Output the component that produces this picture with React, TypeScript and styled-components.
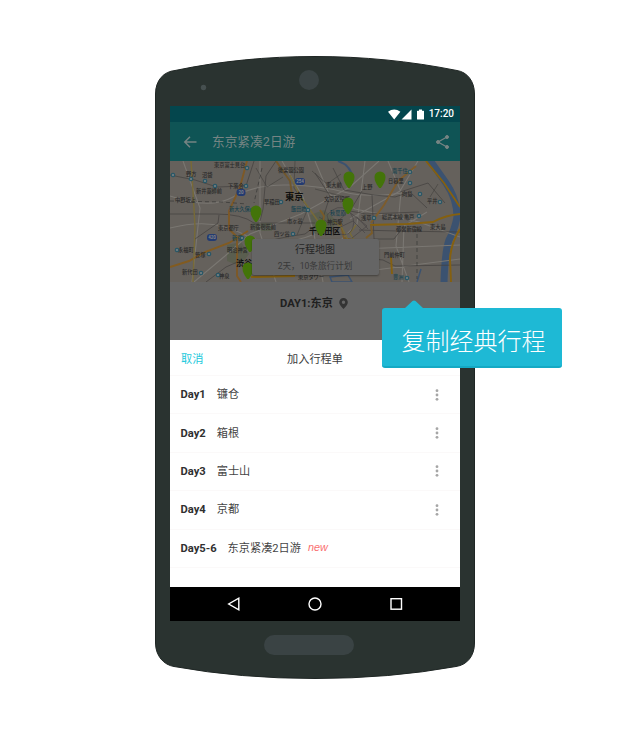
import React from "react";
import styled, { createGlobalStyle } from "styled-components";

const GlobalStyle = createGlobalStyle`
  * { box-sizing: border-box; }
  body { margin: 0; background: #fff; font-family: Roboto, "Noto Sans CJK SC", sans-serif; }
`;

const Stage = styled.main`
  position: relative;
  width: 636px;
  height: 743px;
  padding: 56px 0 0 155px;
  overflow: hidden;
  background: #fff;
`;

const Phone = styled.div`
  position: relative;
  display: flex;
  flex-direction: column;
  width: 320px;
  height: 623px;
  padding: 0 15px;
`;

const Shell = styled.svg`
  position: absolute;
  inset: 0;
  width: 320px;
  height: 623px;
`;

const TopBezel = styled.div`
  height: 50px;
  flex: none;
`;

const BottomBezel = styled.div`
  position: relative;
  display: flex;
  justify-content: center;
  padding: 14px 2px 0 0;
  margin-right: 10px;
`;

const HomeButton = styled.div`
  width: 90px;
  height: 20px;
  border-radius: 10px;
  background: #3a4344;
`;

const Screen = styled.div`
  position: relative;
  display: flex;
  flex-direction: column;
  width: 290px;
  height: 515px;
  flex: none;
  background: #fff;
`;

const StatusBar = styled.div`
  display: flex;
  align-items: center;
  justify-content: flex-end;
  height: 16px;
  padding-right: 6px;
  background: #04464d;
  color: #fff;
  font-size: 10px;
  font-weight: 500;
  line-height: 16px;
  svg { display: block; margin-right: 4px; }
`;

const AppBar = styled.header`
  display: flex;
  align-items: center;
  height: 39px;
  padding: 0 10px 0 13px;
  background: #0f5455;
  color: #768483;
`;

const AppTitle = styled.h1`
  flex: 1;
  margin: 0 0 0 15px;
  font-size: 12.7px;
  font-weight: 400;
  line-height: 18px;
`;

const MapArea = styled.section`
  position: relative;
  display: flex;
  align-items: flex-end;
  justify-content: center;
  height: 121px;
  padding: 0 0 7px 0;
  overflow: hidden;
`;

const MapDrawing = styled.svg`
  position: absolute;
  inset: 0;
`;

const MapCard = styled.div`
  position: relative;
  width: 127px;
  height: 36px;
  padding-top: 3px;
  border-radius: 2px;
  background: #656565;
  box-shadow: 0 1px 2px rgba(0, 0, 0, 0.35);
  text-align: center;
`;

const CardTitle = styled.div`
  color: #252525;
  font-size: 10px;
  line-height: 16px;
`;

const CardSub = styled.div`
  color: #393939;
  font-size: 8.6px;
  line-height: 16px;
  white-space: nowrap;
`;

const DayHeading = styled.div`
  display: flex;
  justify-content: center;
  height: 58px;
  padding: 13px 2px 0 0;
  background: #666;
  color: #202020;
  font-size: 11.2px;
  font-weight: 700;
  line-height: 17px;
  svg { display: block; margin: 3px 0 0 6px; }
`;

const Sheet = styled.section`
  height: 247px;
  background: #fff;
`;

const SheetHeader = styled.div`
  display: grid;
  grid-template-columns: 1fr auto 1fr;
  align-items: center;
  height: 36px;
  padding: 0 11px;
  border-bottom: 1px solid #fbf9f9;
  color: #3c3c3c;
  font-size: 11.2px;
`;

const Cancel = styled.span`
  color: #22c9dc;
`;

const Row = styled.div`
  display: flex;
  align-items: center;
  height: 38.4px;
  padding: 1px 21px 0 10.5px;
  border-bottom: 1px solid #fbf9f9;
  color: #444;
  font-size: 11.2px;
  line-height: 18px;
  svg { margin: -1px 0 0 auto; }
`;

const Day = styled.b`
  margin-right: 11px;
  color: #303030;
  font-size: 11.2px;
  font-weight: 700;
`;

const NewTag = styled.i`
  margin: -3px 0 0 7px;
  color: #fa6f70;
  font-family: "Liberation Sans", sans-serif;
  font-size: 10.8px;
`;

const NavBar = styled.nav`
  display: flex;
  align-items: center;
  justify-content: space-between;
  height: 34px;
  padding: 0 57px;
  background: #000;
`;

const Tooltip = styled.aside`
  position: absolute;
  left: 382px;
  top: 308px;
  display: flex;
  align-items: center;
  justify-content: center;
  width: 180px;
  height: 60px;
  padding-top: 5px;
  padding-left: 3px;
  border-radius: 3px;
  border-bottom: 2px solid #14a9c4;
  background: #1eb9d5;
  color: #fff;
  font-family: "Noto Sans CJK SC", sans-serif;
  font-size: 24px;
  font-weight: 300;
  line-height: 36px;
  white-space: nowrap;
`;

const TooltipArrow = styled.svg`
  position: absolute;
  left: 22px;
  top: -8px;
`;

const pins: [number, number][] = [
  [86, 50], [80, 80], [78, 107], [179, 16], [210, 16], [178, 42], [151, 64],
];

type Label = [number, number, string, string?];
const labels: Label[] = [
  [16, 15, "野方"], [32, 16, "沼袋"], [26, 32, "新井薬師前"], [58, 27, "下落合"],
  [44, 6, "東京富士見台"], [108, 11, "後楽園公園"], [5, 41, "中野坂上"], [59, 50, "新大久保", "#17424e"],
  [94, 43, "早稲田"], [121, 50, "飯田橋", "#17424e"], [48, 69, "東京都庁"], [80, 68, "新宿御苑前"],
  [62, 79, "新宿", "#17424e"], [117, 62, "市ヶ谷"], [104, 75, "四ツ谷"], [8, 91, "永福町"],
  [25, 96, "笹塚"], [57, 91, "明治神宮"], [12, 113, "新代田"], [49, 117, "神泉"],
  [156, 26, "東大前"], [192, 28, "上野"], [154, 40, "文京区役所"], [160, 54, "秋葉原", "#17424e"],
  [157, 63, "神田駅"], [191, 59, "浅草"], [222, 12, "南千住", "#17424e"], [218, 22, "日暮里"],
  [232, 35, "向島"], [257, 42, "平井"], [212, 58, "総武本線 亀戸"], [226, 70, "都営新宿線"],
  [260, 68, "東大島"], [214, 96, "門前仲町"], [223, 118, "豊洲", "#17424e"], [128, 118, "東京タワー"],
];

const stations: [number, number][] = [
  [3, 14], [21, 18], [35, 20], [45, 25], [77, 7], [76, 25], [82, 49], [72, 77],
  [7, 89], [39, 93], [31, 112], [48, 114], [138, 49], [123, 73], [111, 41],
  [204, 57], [240, 11], [240, 22], [250, 33], [270, 41], [249, 55], [237, 117],
];

const TokyoMap = () => (
  <MapDrawing width="290" height="121" viewBox="0 0 290 121">
    <rect width="290" height="121" fill="#65615c" />
    <g fill="#5a5e4f">
      <path d="M57 84l14-3 8 12-9 12-13-5zM140 54l14-5 12 10-4 12-17 2zM82 62h20v8H84z" />
    </g>
    <g fill="none" stroke="#3b5270">
      <path d="M259 -2L276 22Q287 38 287 56Q285 68 279 79Q275 90 274 121" strokeWidth="7" />
      <path d="M168 0Q181 4 183 18" strokeWidth="2" />
      <path d="M160 116l18-2 4 7h-20zM251 108l-4 13" strokeWidth="1.500" />
    </g>
    <g fill="none" stroke="#7a7772" strokeWidth="1.100">
      <path d="M0 35Q40 49 63 36T119 24 174 31 232 32M0 67Q43 56 73 73T145 73M24 121L55 95 80 73 131 53 180 26 209 0M13 0L30 47 22 121M90 0V72L106 121M112 0L133 36 144 73 153 121" />
      <path d="M145 0L159 33 185 48 249 61 290 76M155 95L187 63 195 0M218 0L231 31 226 85 239 121M190 88L290 84M190 111L290 98M248 0L230 30 180 58M257 51L234 65 232 121" />
    </g>
    <g fill="none" stroke="#423f3d" strokeWidth=".7">
      <path d="M0 53H46Q72 53 84 62H145M0 14L25 19 47 26 76 25 84 0M25 78L48 62 49 54M36 121L56 106 72 99M106 0L96 15 93 48 90 60" />
      <path d="M102 79L116 76 135 73 152 60 160 35 145 12M163 7L174 29 204 34 225 36 240 31 257 47M192 30L180 50 196 53 249 51M202 34L204 78H224L234 65M230 31L258 22 275 42M192 97L213 99 225 105 290 104M189 69L228 70 290 71" />
      <path d="M86 7L97 26 113 16M125 0L124 27 138 47 127 74M142 10L157 23 171 13M145 28L175 36 176 53 163 64 149 56M268 23L260 36" strokeWidth=".6" />
    </g>
    <g fill="none" stroke="#85600f" strokeWidth="1.900">
      <path d="M77 0L70 26 59 50V68L67 76V115L71 121" stroke="#7e5926" />
      <path d="M0 106L19 100 35 91 59 82 78 70" stroke="#825b20" />
      <path d="M106 0L115 13 120 20 123 40" stroke="#71572c" />
      <path d="M246 5L228 20 214 44 201 62" stroke="#7d5c2c" />
      <path d="M200 64L237 63 263 61Q276 54 290 53M221 96L222 113M256 0L274 22 290 46M290 68Q281 82 280 98L281 121M81 116L125 115" />
      <path d="M150 49L154 55 153 61M170 60L174 77 182 79M201 64L202 72 196 77" stroke="#795b29" />
    </g>
    <g fill="none" stroke="#776a37" strokeWidth="1.400">
      <path d="M21 0L23 30 25 66 23 121M163 60L172 67 178 79M186 64L180 72 184 79M120 14L130 35 148 60" />
    </g>
    <g fill="none" stroke="#4b4847" strokeWidth=".8">
      <path d="M157 54Q168 42 177 49T183 66 170 73 157 54M178 50L197 65 182 77M187 56L198 68M160 71L183 60 195 72" />
    </g>
    <g fill="none" stroke="#373635" strokeWidth=".7" strokeDasharray="4 3">
      <path d="M0 40L52 41 77 43M247 66V118M92 7L84 42" />
    </g>
    <g fontFamily="Noto Sans CJK JP" fontSize="5.200" fill="#292929">
      {labels.map(([x, y, text, fill]) => (
        <text key={text} x={x} y={y} fill={fill} fontWeight="500">{text}</text>
      ))}
    </g>
    <g fill="#69787c" stroke="#185367" strokeWidth="1">
      {stations.map(([x, y]) => (
        <rect key={`${x}-${y}`} x={x - 1.6} y={y - 1.6} width="3.200" height="3.200" rx=".8" />
      ))}
    </g>
    <g fill="#233b72">
      <rect x="66.500" y="28" width="9" height="7" rx="3" />
      <rect x="37" y="73" width="10" height="7" rx="3" />
      <rect x="125" y="17" width="10" height="7" rx="3" />
    </g>
    <g fontFamily="Roboto" fontSize="4.500" fontWeight="700" fill="#858585" textAnchor="middle">
      <text x="71" y="33.200">20</text>
      <text x="42" y="78.200">420</text>
      <text x="130" y="22.200">254</text>
    </g>
    <g fontFamily="Noto Sans CJK JP" fill="#111" fontWeight="700">
      <text x="115" y="38.500" fontSize="9.200">東京</text>
      <text x="139" y="73" fontSize="7.800">千代田区</text>
      <text x="66" y="105" fontSize="8">渋谷</text>
    </g>
    <g fill="#437409">
      {pins.map(([x, y]) => (
        <path key={`${x}-${y}`} transform={`translate(${x} ${y})`} d="M-5.500 0a5.500 5.500 0 0 1 11 0Q5.500 5 .8 11H-.8Q-5.500 5-5.500 0Z" />
      ))}
    </g>
  </MapDrawing>
);

const MoreDots = () => (
  <svg width="4" height="14" viewBox="0 0 4 14" fill="#a6a6a6">
    <circle cx="2" cy="2.700" r="1.400" />
    <circle cx="2" cy="7" r="1.400" />
    <circle cx="2" cy="11.300" r="1.400" />
  </svg>
);

const days = [
  { day: "Day1", place: "镰仓" },
  { day: "Day2", place: "箱根" },
  { day: "Day3", place: "富士山" },
  { day: "Day4", place: "京都" },
  { day: "Day5-6", place: "东京紧凑2日游", isNew: true },
];

export default function App() {
  return (
    <Stage>
      <GlobalStyle />
      <Phone>
        <Shell viewBox="0 0 320 623">
          <path d="M0.500 38C0.500 24 9 15.500 20 14.500C66 5 112 .5 160 .5S254 5 302 14.500C312 16 319.500 25 319.500 38V587C319.500 600 312 609 301 610.500Q235 622.500 160 622.500T19 610.500C9 609 .5 600 .5 587Z" fill="#2a3330" stroke="#1f2624" />
          <circle cx="154" cy="24" r="10" fill="#3a4344" />
          <circle cx="48.500" cy="31.500" r="2.700" fill="#465050" />
        </Shell>
        <TopBezel />
        <Screen>
          <StatusBar>
            <svg width="37" height="11" viewBox="0 0 37 11" fill="#fff">
              <path d="M0 2.700Q6.200-1.700 12.400 2.700L6.200 10.500ZM23.500 .5V10.500H13.500ZM29.500 1.700H31V.5H34V1.700H35.500Q36 1.700 36 2.200V10Q36 10.500 35.500 10.500H29.500Q29 10.500 29 10V2.200Q29 1.700 29.500 1.700Z" />
            </svg>
            17:20
          </StatusBar>
          <AppBar>
            <svg width="14" height="12" viewBox="0 0 14 12" fill="none" stroke="#768483" strokeWidth="1.500">
              <path d="M13.500 6H2M7 .8L1.800 6 7 11.200" />
            </svg>
            <AppTitle>东京紧凑2日游</AppTitle>
            <svg width="15" height="16" viewBox="0 0 15 16" fill="#768483" stroke="#768483">
              <path d="M12 3L3 8l9 5" fill="none" strokeWidth="1.300" />
              <circle cx="12" cy="3" r="1.500" />
              <circle cx="3" cy="8" r="1.500" />
              <circle cx="12" cy="13" r="1.500" />
            </svg>
          </AppBar>
          <MapArea>
            <TokyoMap />
            <MapCard>
              <CardTitle>行程地图</CardTitle>
              <CardSub>2天，10条旅行计划</CardSub>
            </MapCard>
          </MapArea>
          <DayHeading>
            DAY1:东京
            <svg width="9" height="11" viewBox="0 0 9 11">
              <path fillRule="evenodd" d="M4.500 0A4.300 4.300 0 0 1 8.800 4.300Q8.800 7 4.500 11Q.2 7 .2 4.300A4.300 4.300 0 0 1 4.500 0ZM4.500 2.600a1.700 1.700 0 1 0 0 3.400a1.700 1.700 0 1 0 0-3.400Z" fill="#343434" />
            </svg>
          </DayHeading>
          <Sheet>
            <SheetHeader>
              <Cancel>取消</Cancel>
              <span>加入行程单</span>
            </SheetHeader>
            {days.map(({ day, place, isNew }) => (
              <Row key={day}>
                <Day>{day}</Day>
                {place}
                {isNew ? <NewTag>new</NewTag> : <MoreDots />}
              </Row>
            ))}
          </Sheet>
          <NavBar>
            <svg width="14" height="14" viewBox="0 0 14 14" fill="none" stroke="#fff" strokeWidth="1.400">
              <path d="M11.800 1.200V12.800L1.700 7Z" />
            </svg>
            <svg width="14" height="14" viewBox="0 0 14 14" fill="none" stroke="#fff" strokeWidth="1.400">
              <circle cx="7" cy="7" r="6" />
            </svg>
            <svg width="14" height="14" viewBox="0 0 14 14" fill="none" stroke="#fff" strokeWidth="1.400">
              <rect x="2" y="1.700" width="10.500" height="10.500" />
            </svg>
          </NavBar>
        </Screen>
        <BottomBezel>
          <HomeButton />
        </BottomBezel>
      </Phone>
      <Tooltip>
        <TooltipArrow width="20" height="9" viewBox="0 0 20 9">
          <path d="M0 9L8.500 1Q10 -.2 11.500 1L20 9Z" fill="#1eb9d5" />
        </TooltipArrow>
        复制经典行程
      </Tooltip>
    </Stage>
  );
}
